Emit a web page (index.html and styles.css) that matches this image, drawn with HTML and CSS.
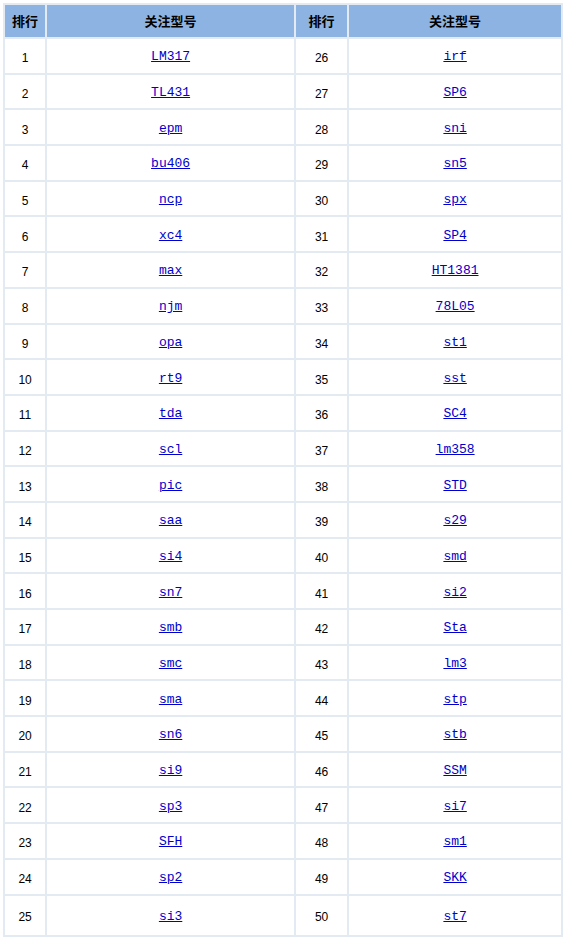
FILE: index.html
```html
<!DOCTYPE html>
<html>
<head>
<meta charset="utf-8">
<link rel="stylesheet" href="styles.css">
</head>
<body>
<table class="rank">
<colgroup><col class="c-no"><col class="c-name"><col class="c-no2"><col class="c-name2"></colgroup>
<thead>
<tr><th>排行</th><th>关注型号</th><th>排行</th><th>关注型号</th></tr>
</thead>
<tbody>
<tr><td class="no">1</td><td><a href="#">LM317</a></td><td class="no">26</td><td><a href="#">irf</a></td></tr>
<tr><td class="no">2</td><td><a href="#">TL431</a></td><td class="no">27</td><td><a href="#">SP6</a></td></tr>
<tr><td class="no">3</td><td><a href="#">epm</a></td><td class="no">28</td><td><a href="#">sni</a></td></tr>
<tr><td class="no">4</td><td><a href="#">bu406</a></td><td class="no">29</td><td><a href="#">sn5</a></td></tr>
<tr><td class="no">5</td><td><a href="#">ncp</a></td><td class="no">30</td><td><a href="#">spx</a></td></tr>
<tr><td class="no">6</td><td><a href="#">xc4</a></td><td class="no">31</td><td><a href="#">SP4</a></td></tr>
<tr><td class="no">7</td><td><a href="#">max</a></td><td class="no">32</td><td><a href="#">HT1381</a></td></tr>
<tr><td class="no">8</td><td><a href="#">njm</a></td><td class="no">33</td><td><a href="#">78L05</a></td></tr>
<tr><td class="no">9</td><td><a href="#">opa</a></td><td class="no">34</td><td><a href="#">st1</a></td></tr>
<tr><td class="no">10</td><td><a href="#">rt9</a></td><td class="no">35</td><td><a href="#">sst</a></td></tr>
<tr><td class="no">11</td><td><a href="#">tda</a></td><td class="no">36</td><td><a href="#">SC4</a></td></tr>
<tr><td class="no">12</td><td><a href="#">scl</a></td><td class="no">37</td><td><a href="#">lm358</a></td></tr>
<tr><td class="no">13</td><td><a href="#">pic</a></td><td class="no">38</td><td><a href="#">STD</a></td></tr>
<tr><td class="no">14</td><td><a href="#">saa</a></td><td class="no">39</td><td><a href="#">s29</a></td></tr>
<tr><td class="no">15</td><td><a href="#">si4</a></td><td class="no">40</td><td><a href="#">smd</a></td></tr>
<tr><td class="no">16</td><td><a href="#">sn7</a></td><td class="no">41</td><td><a href="#">si2</a></td></tr>
<tr><td class="no">17</td><td><a href="#">smb</a></td><td class="no">42</td><td><a href="#">Sta</a></td></tr>
<tr><td class="no">18</td><td><a href="#">smc</a></td><td class="no">43</td><td><a href="#">lm3</a></td></tr>
<tr><td class="no">19</td><td><a href="#">sma</a></td><td class="no">44</td><td><a href="#">stp</a></td></tr>
<tr><td class="no">20</td><td><a href="#">sn6</a></td><td class="no">45</td><td><a href="#">stb</a></td></tr>
<tr><td class="no">21</td><td><a href="#">si9</a></td><td class="no">46</td><td><a href="#">SSM</a></td></tr>
<tr><td class="no">22</td><td><a href="#">sp3</a></td><td class="no">47</td><td><a href="#">si7</a></td></tr>
<tr><td class="no">23</td><td><a href="#">SFH</a></td><td class="no">48</td><td><a href="#">sm1</a></td></tr>
<tr><td class="no">24</td><td><a href="#">sp2</a></td><td class="no">49</td><td><a href="#">SKK</a></td></tr>
<tr class="last"><td class="no">25</td><td><a href="#">si3</a></td><td class="no">50</td><td><a href="#">st7</a></td></tr>
</tbody>
</table>
</body>
</html>
```
FILE: styles.css
```css
html, body {
  margin: 0;
  padding: 0;
  background: #ffffff;
}
body {
  padding: 3px 0 0 3px;
  font-family: "Liberation Sans", "Noto Sans CJK SC", sans-serif;
}
.rank {
  width: 560px;
  border-collapse: separate;
  border-spacing: 2px;
  background: #e3eaf2;
  table-layout: fixed;
}
.c-no { width: 40px; }
.c-name { width: 246px; }
.c-no2 { width: 51px; }
.c-name2 { width: 211px; }
.rank th {
  background: #8db3e2;
  height: 32px;
  padding: 0;
  font-family: "Noto Sans CJK SC", sans-serif;
  font-size: 13px;
  font-weight: bold;
  color: #000;
  text-align: center;
  vertical-align: middle;
  line-height: 16px;
}
.rank td {
  background: #ffffff;
  height: 32.7px;
  padding: 1px 0 0;
  line-height: 16px;
  text-align: center;
  vertical-align: middle;
}
.rank td.no {
  height: 28.7px;
  padding-top: 5px;
  font-family: "Liberation Sans", sans-serif;
  font-size: 12px;
  color: #000;
}
.rank tr.last td {
  height: 37px;
  padding-top: 2px;
}
.rank tr.last td.no {
  height: 35px;
  padding-top: 4px;
}
.rank a {
  font-family: "Liberation Mono", monospace;
  font-size: 13px;
  color: #0000cc;
  text-decoration: underline;
}
```
